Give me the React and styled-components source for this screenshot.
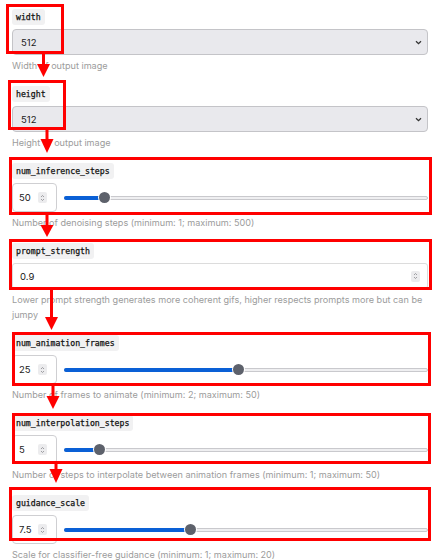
import React from "react";
import styled, { createGlobalStyle } from "styled-components";

const Global = createGlobalStyle`
  html, body { margin: 0; padding: 0; background: #ffffff; }
  body { font-family: Inter, "Noto Sans", sans-serif; }
`;

const Page = styled.div`
  position: relative;
  width: 434px;
  height: 560px;
  overflow: hidden;
  box-sizing: border-box;
  padding: 9px 6px 0 12px;
  display: flex;
  flex-direction: column;
  gap: 13px;
`;

const Field = styled.div`
  display: flex;
  flex-direction: column;
  align-items: flex-start;
`;

const Chip = styled.span`
  display: inline-block;
  height: 16px;
  line-height: 16px;
  padding: 0 4px;
  border-radius: 3px;
  background: #f1f1f2;
  color: #111;
  font-family: "DejaVu Sans Mono", "Liberation Mono", monospace;
  font-size: 8.2px;
  font-weight: 400;
  -webkit-text-stroke: 0.25px #111;
  margin-bottom: 4px;
`;

const SelectBox = styled.div`
  width: 100%;
  height: 26px;
  box-sizing: border-box;
  border: 1px solid #c4c4c8;
  border-radius: 4px;
  background: #e9e9ed;
  display: flex;
  align-items: center;
  justify-content: space-between;
  padding: 0 5px 0 8px;
  font-size: 9.5px;
  color: #1a1a1a;
`;

const TextBox = styled.div`
  width: 100%;
  height: 26px;
  box-sizing: border-box;
  border: 1px solid #dcdcdc;
  border-radius: 3px;
  background: #fff;
  display: flex;
  align-items: center;
  justify-content: space-between;
  padding: 0 7px 0 7px;
  font-size: 9.5px;
  color: #1a1a1a;
`;

const SliderRow = styled.div`
  width: 100%;
  height: 29px;
  display: flex;
  align-items: center;
  gap: 7px;
`;

const NumberBox = styled.div`
  width: 45px;
  height: 29px;
  flex: none;
  box-sizing: border-box;
  border: 1px solid #cfcfd2;
  border-radius: 4px;
  background: #fff;
  display: flex;
  align-items: center;
  justify-content: space-between;
  padding: 0 9px 0 6px;
  font-size: 9.5px;
  color: #1a1a1a;
`;

const Spinner = styled.span`
  width: 9px;
  height: 11px;
  border-radius: 2px;
  background: #ececee;
  display: flex;
  align-items: center;
  justify-content: center;
`;

const Track = styled.div`
  position: relative;
  flex: 1;
  height: 4px;
  box-sizing: border-box;
  border: 1px solid #c9c9cd;
  border-radius: 2px;
  background: #efeff1;
`;

const Fill = styled.div`
  position: absolute;
  left: -1px;
  top: -1px;
  height: 4px;
  border-radius: 2px;
  background: #0a60d6;
`;

const Thumb = styled.div`
  position: absolute;
  top: 50%;
  width: 11px;
  height: 11px;
  margin-left: -5.5px;
  margin-top: -5.5px;
  border-radius: 50%;
  background: #5d616b;
  box-shadow: 0 0 0 1px #ffffff;
`;

const Desc = styled.div`
  margin-top: 3px;
  font-size: 9.1px;
  line-height: 15px;
  color: #9c9c9c;
`;

const Overlay = styled.svg`
  position: absolute;
  left: 0;
  top: 0;
  pointer-events: none;
`;

const Chevron = () => (
  <svg width="7" height="5" viewBox="0 0 7 5">
    <path d="M1 1.2 L3.5 3.6 L6 1.2" fill="none" stroke="#333" strokeWidth="1.3" />
  </svg>
);

const SpinIcon = () => (
  <Spinner>
    <svg width="5" height="8" viewBox="0 0 5 8">
      <path d="M1 3 L2.5 1.5 L4 3 M1 5 L2.5 6.5 L4 5" fill="none" stroke="#8a8a8e" strokeWidth="0.8" />
    </svg>
  </Spinner>
);

const Slider = ({ value, min, max }) => {
  const frac = (value - min) / (max - min);
  const pos = `calc(5.5px + ${frac} * (100% - 11px))`;
  return (
    <Track>
      <Fill style={{ width: pos }} />
      <Thumb style={{ left: pos }} />
    </Track>
  );
};

const fields = [
  { name: "width", kind: "select", value: "512", desc: "Width of output image" },
  { name: "height", kind: "select", value: "512", desc: "Height of output image" },
  { name: "num_inference_steps", kind: "slider", value: 50, min: 1, max: 500, desc: "Number of denoising steps (minimum: 1; maximum: 500)" },
  { name: "prompt_strength", kind: "text", value: "0.9", desc: "Lower prompt strength generates more coherent gifs, higher respects prompts more but can be jumpy" },
  { name: "num_animation_frames", kind: "slider", value: 25, min: 2, max: 50, desc: "Number of frames to animate (minimum: 2; maximum: 50)" },
  { name: "num_interpolation_steps", kind: "slider", value: 5, min: 1, max: 50, desc: "Number of steps to interpolate between animation frames (minimum: 1; maximum: 50)" },
  { name: "guidance_scale", kind: "slider", value: 7.5, min: 1, max: 20, desc: "Scale for classifier-free guidance (minimum: 1; maximum: 20)" },
];

const boxes = [
  [6, 4, 64, 54],
  [8, 80, 66, 130],
  [9, 157, 432, 215],
  [9, 239, 432, 290],
  [12, 332, 431, 386],
  [12, 413, 431, 464],
  [9, 487, 431, 541],
];

const arrows = [
  { x: 43.5, y0: 54, top: 64, tip: 77 },
  { x: 47, y0: 130, top: 139, tip: 153 },
  { x: 47, y0: 215, top: 225, tip: 237 },
  { x: 51.5, y0: 290, top: 317, tip: 330 },
  { x: 53, y0: 386, top: 396, tip: 409 },
  { x: 56, y0: 464, top: 469, tip: 483 },
];

const Annotations = () => (
  <Overlay width="434" height="560" viewBox="0 0 434 560">
    {boxes.map(([x0, y0, x1, y1], i) => (
      <rect key={i} x={x0 + 1.5} y={y0 + 1.5} width={x1 - x0 - 3} height={y1 - y0 - 3} fill="none" stroke="#ff0000" strokeWidth="3" />
    ))}
    {arrows.map((a, i) => (
      <g key={i} fill="#ff0000">
        <rect x={a.x - 1.5} y={a.y0} width="3" height={a.top - a.y0 + 1} />
        <polygon points={`${a.x - 6.5},${a.top} ${a.x + 6.5},${a.top} ${a.x},${a.tip}`} />
      </g>
    ))}
  </Overlay>
);

export default function App() {
  return (
    <>
      <Global />
      <Page>
        {fields.map((f) => (
          <Field key={f.name}>
            <Chip>{f.name}</Chip>
            {f.kind === "select" && (
              <SelectBox>
                <span>{f.value}</span>
                <Chevron />
              </SelectBox>
            )}
            {f.kind === "text" && (
              <TextBox>
                <span>{f.value}</span>
                <SpinIcon />
              </TextBox>
            )}
            {f.kind === "slider" && (
              <SliderRow>
                <NumberBox>
                  <span>{f.value}</span>
                  <SpinIcon />
                </NumberBox>
                <Slider value={f.value} min={f.min} max={f.max} />
              </SliderRow>
            )}
            <Desc>{f.desc}</Desc>
          </Field>
        ))}
        <Annotations />
      </Page>
    </>
  );
}
